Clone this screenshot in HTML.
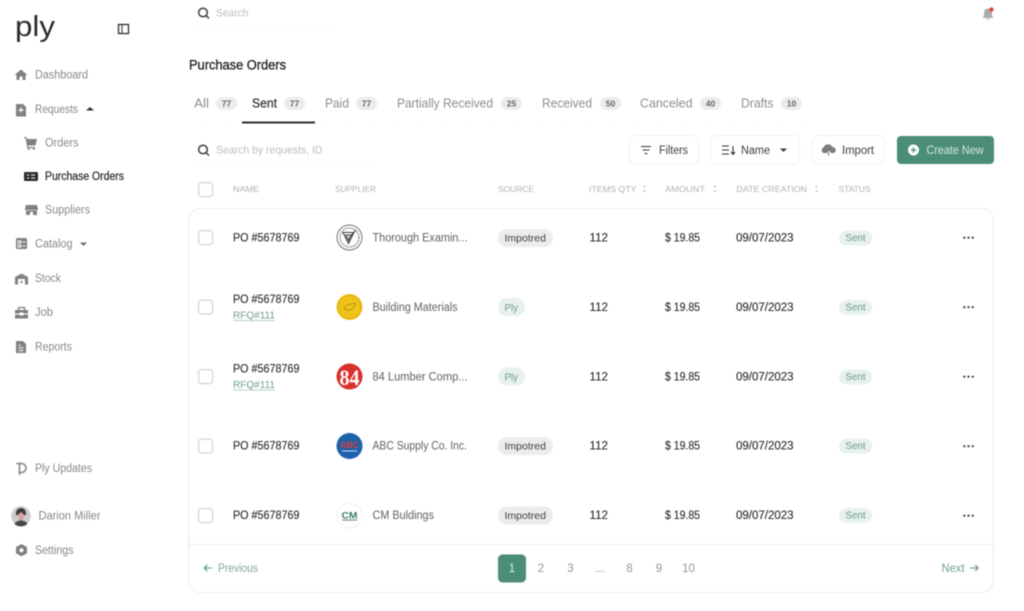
<!DOCTYPE html>
<html lang="en">
<head>
<meta charset="utf-8">
<title>Purchase Orders</title>
<style>
html,body{margin:0;padding:0;background:#fff;width:1024px;height:611px;overflow:hidden}
svg{display:block;filter:blur(.45px)}
text{font-family:"Liberation Sans",sans-serif;font-size:11px}
.nav{fill:#858989;font-size:11.5px}
.dk{fill:#2c2f2f;stroke:#2c2f2f;stroke-width:.25}
.tab{fill:#8a8e8e;font-size:13px}
.bdg{fill:#ececec}
.bt{fill:#666;font-size:8.5px;font-weight:bold;text-anchor:middle}
.th{fill:#afb3b3;font-size:8.5px}
.cell{fill:#282b2b;font-size:11.5px;stroke:#282b2b;stroke-width:.12}
.sup{fill:#5e6262;font-size:11.5px}
.pg{fill:#939797;font-size:11.5px;text-anchor:middle}
.ic{fill:#7e8282}
.cb{fill:#fff;stroke:#cfd5d4;stroke-width:1.2}
.btn{fill:#fff;stroke:#eef3f2;stroke-width:1}
</style>
</head>
<body>
<svg width="1024" height="611" viewBox="0 0 1024 611" xmlns="http://www.w3.org/2000/svg">
<rect width="1024" height="611" fill="#fff"/>

<!-- logo -->
<text x="15" y="36" fill="#2b2d2d" textLength="40" lengthAdjust="spacingAndGlyphs" style="font-size:29px">ply</text>
<!-- collapse -->
<rect x="118.500" y="24.500" width="10" height="9" fill="none" stroke="#2c2f2f" stroke-width="1.300"/>
<path d="M122 24.500v9" stroke="#2c2f2f" stroke-width="1"/>

<!-- sidebar icons -->
<path class="ic" d="M21 69.500l6.500 5.500h-2v5h-3v-3.500h-3V80h-3v-5h-2z"/>
<path class="ic" d="M16 104h7l3 3v9.500H16z"/><path d="M21 107.500v5M18.500 110h5" stroke="#fff" stroke-width="1.200"/>
<path class="ic" d="M24 137h2l1.500 2H37l-1.500 6.500H28l.5 1.500H35v1.200H27.500L25.500 138.200H24z"/><circle class="ic" cx="28.500" cy="149" r="1"/><circle class="ic" cx="34" cy="149" r="1"/>
<rect x="24" y="172" width="14" height="9" rx="1" fill="#2c2f2f"/><path d="M27 175h2M27 178h2M31 175h4M31 178h4" stroke="#fff" stroke-width="1"/>
<path class="ic" d="M26 205h11l1 3.500v1.500h-13v-1.500z"/><path class="ic" d="M26 210.500h11v4.500h-4v-3h-3v3h-4z"/>
<rect class="ic" x="16" y="238" width="11" height="11" rx="1.500"/><path d="M18 241h3v2h-3zM18 245h3v2h-3zM22.500 242h3M22.500 246h3" stroke="#fff" stroke-width=".9" fill="none"/>
<path class="ic" d="M15 277l6.500-3.500 6.500 3.500v7.500h-13z"/><rect x="18" y="279" width="7" height="5.500" fill="#fff"/><rect x="20.500" y="281" width="2" height="2" class="ic"/>
<path class="ic" d="M15 310h13v3.500h-4.500v-1h-4v1H15zM15 314.500h4.500v1h4v-1H28v4H15z"/><path d="M18.500 310v-2.500h6V310" fill="none" stroke="#7e8282" stroke-width="1.300"/>
<path class="ic" d="M16 341h7l3 3v9H16z"/><path d="M18.500 345.500h2.500M18.500 348h5M18.500 350.500h5" stroke="#fff" stroke-width=".9"/>
<path d="M16.500 463.500h5a4.500 4.500 0 0 1 0 9H20M19.500 463.500V475" fill="none" stroke="#7e8282" stroke-width="1.500"/>
<path class="ic" d="M21.500 544l5.500 3v6.400l-5.500 3-5.500-3V547z"/><circle cx="21.500" cy="550.200" r="2" fill="#fff"/>

<!-- avatar -->
<circle cx="21" cy="516" r="9.800" fill="#c9cecd"/>
<path d="M16 513a5 5 0 0 1 10 0v2h-10z" fill="#3a3c3c"/>
<ellipse cx="21" cy="516.500" rx="3" ry="4" fill="#d9a29b"/>
<path d="M14.500 524c1.500-2.500 3.500-3.500 6.500-3.500s5 1 6.500 3.500a9.800 9.800 0 0 1-13 0z" fill="#46494a"/>

<!-- sidebar text -->
<text class="nav" x="35" y="78.500" textLength="53" lengthAdjust="spacingAndGlyphs">Dashboard</text>
<text class="nav" x="35" y="113" textLength="43" lengthAdjust="spacingAndGlyphs">Requests</text>
<path d="M86 110.500l4-3.500 4 3.500z" fill="#2c2f2f"/>
<text class="nav" x="45" y="146.500" textLength="33.500" lengthAdjust="spacingAndGlyphs">Orders</text>
<text class="dk" x="45" y="180" textLength="79" lengthAdjust="spacingAndGlyphs" style="font-size:11.5px">Purchase Orders</text>
<text class="nav" x="45" y="213.500" textLength="45" lengthAdjust="spacingAndGlyphs">Suppliers</text>
<text class="nav" x="35" y="247.500" textLength="37.500" lengthAdjust="spacingAndGlyphs">Catalog</text>
<path d="M80 242.500h7l-3.500 3.500z" fill="#6a6e6e"/>
<text class="nav" x="35" y="282" textLength="26" lengthAdjust="spacingAndGlyphs">Stock</text>
<text class="nav" x="35" y="316" textLength="18" lengthAdjust="spacingAndGlyphs">Job</text>
<text class="nav" x="35" y="350.500" textLength="37" lengthAdjust="spacingAndGlyphs">Reports</text>
<text class="nav" x="35" y="472" textLength="57" lengthAdjust="spacingAndGlyphs">Ply Updates</text>
<text class="nav" x="38.500" y="519.500" textLength="62" lengthAdjust="spacingAndGlyphs">Darion Miller</text>
<text class="nav" x="35" y="554" textLength="38.500" lengthAdjust="spacingAndGlyphs">Settings</text>

<!-- top bar -->
<circle cx="203" cy="12.500" r="4.300" fill="none" stroke="#3a3d3d" stroke-width="1.500"/><path d="M206 15.500l3 3" stroke="#3a3d3d" stroke-width="1.500"/>
<text x="216" y="16.500" fill="#bcc0c0" textLength="32.500" lengthAdjust="spacingAndGlyphs">Search</text>
<path d="M196 25.500h136" stroke="#eef0f0" stroke-dasharray="1 3"/>
<path d="M983 18v-1l1-1v-3.500a4 4 0 0 1 8 0V16l1 1v1z" fill="#a9adad"/>
<rect x="986.500" y="18.500" width="3" height="1.300" fill="#c4c7c7"/>
<circle cx="991.500" cy="9.500" r="2.200" fill="#e8403a"/>

<!-- title -->
<text x="189" y="69.500" fill="#262828" stroke="#262828" stroke-width=".35" textLength="97" lengthAdjust="spacingAndGlyphs" style="font-size:13.5px">Purchase Orders</text>

<!-- tabs -->
<text class="tab" x="194" y="107.500" textLength="15" lengthAdjust="spacingAndGlyphs">All</text>
<rect class="bdg" x="216" y="97" width="21" height="13" rx="6.500"/><text class="bt" x="226.500" y="106.500">77</text>
<text class="tab" x="252" y="107.500" textLength="25" lengthAdjust="spacingAndGlyphs" style="fill:#2a2c2c;stroke:#2a2c2c;stroke-width:.2">Sent</text>
<rect class="bdg" x="284" y="97" width="21" height="13" rx="6.500"/><text class="bt" x="294.500" y="106.500">77</text>
<text class="tab" x="325" y="107.500" textLength="24" lengthAdjust="spacingAndGlyphs">Paid</text>
<rect class="bdg" x="356" y="97" width="21" height="13" rx="6.500"/><text class="bt" x="366.500" y="106.500">77</text>
<text class="tab" x="397" y="107.500" textLength="96" lengthAdjust="spacingAndGlyphs">Partially Received</text>
<rect class="bdg" x="501" y="97" width="21" height="13" rx="6.500"/><text class="bt" x="511.500" y="106.500">25</text>
<text class="tab" x="542" y="107.500" textLength="50" lengthAdjust="spacingAndGlyphs">Received</text>
<rect class="bdg" x="600" y="97" width="21" height="13" rx="6.500"/><text class="bt" x="610.500" y="106.500">50</text>
<text class="tab" x="640" y="107.500" textLength="52.500" lengthAdjust="spacingAndGlyphs">Canceled</text>
<rect class="bdg" x="700" y="97" width="21" height="13" rx="6.500"/><text class="bt" x="710.500" y="106.500">40</text>
<text class="tab" x="741" y="107.500" textLength="32.500" lengthAdjust="spacingAndGlyphs">Drafts</text>
<rect class="bdg" x="781" y="97" width="21" height="13" rx="6.500"/><text class="bt" x="791.500" y="106.500">10</text>
<path d="M189 122.500h620" stroke="#f0f2f2" stroke-dasharray="1 5"/>
<rect x="242" y="121.500" width="73" height="2" fill="#2c2f2f"/>

<!-- search -->
<circle cx="203" cy="149.500" r="4.300" fill="none" stroke="#3a3d3d" stroke-width="1.500"/><path d="M206 152.500l3 3" stroke="#3a3d3d" stroke-width="1.500"/>
<text x="216" y="153.500" fill="#bcc0c0" textLength="106.500" lengthAdjust="spacingAndGlyphs">Search by requests, ID</text>
<path d="M195 160.500h180" stroke="#eef0f0" stroke-dasharray="1 3"/>

<!-- buttons -->
<rect class="btn" x="629.500" y="135.500" width="69" height="29" rx="6"/>
<path d="M641 146.500h10M642.500 150h7M644.500 153.500h3" stroke="#333" stroke-width="1.100"/>
<text x="659" y="154" fill="#3a3d3d" textLength="29" lengthAdjust="spacingAndGlyphs" style="font-size:11.5px">Filters</text>
<rect class="btn" x="710.500" y="135.500" width="89" height="29" rx="6"/>
<path d="M722 146h7M722 150h7M722 154h7M733 146v8M731 152l2 2.500 2-2.500" fill="none" stroke="#333" stroke-width="1.100"/>
<text x="741" y="154" fill="#3a3d3d" textLength="29" lengthAdjust="spacingAndGlyphs" style="font-size:11.5px">Name</text>
<path d="M780 148.500h7l-3.500 3.500z" fill="#3a3d3d"/>
<rect class="btn" x="812.500" y="135.500" width="72" height="29" rx="6"/>
<path d="M823.500 153a3 3 0 0 1 0-5.500 5 5 0 0 1 9-.5 3.200 3.200 0 0 1 1.500 6h-3l-2-2.500-2 2.500z" fill="#7a7e7e"/>
<path d="M828.500 152v3.500" stroke="#7a7e7e" stroke-width="1.200"/>
<text x="842" y="154" fill="#3a3d3d" textLength="32" lengthAdjust="spacingAndGlyphs" style="font-size:11.5px">Import</text>
<rect x="897" y="136" width="97" height="28" rx="4" fill="#4b8e75"/>
<circle cx="913.500" cy="150" r="5.500" fill="#fff"/><path d="M913.500 147.200v5.600M910.700 150h5.600" stroke="#4b8e75" stroke-width="1.200"/>
<text x="926.500" y="154" fill="#d6e7e0" textLength="57" lengthAdjust="spacingAndGlyphs" style="font-size:11.5px">Create New</text>

<!-- header row -->
<rect class="cb" x="198.600" y="182.600" width="14" height="14" rx="3"/>
<text class="th" x="233" y="192" textLength="26" lengthAdjust="spacingAndGlyphs">NAME</text>
<text class="th" x="335" y="192" textLength="41" lengthAdjust="spacingAndGlyphs">SUPPLIER</text>
<text class="th" x="498" y="192" textLength="36" lengthAdjust="spacingAndGlyphs">SOURCE</text>
<text class="th" x="589" y="192" textLength="47.500" lengthAdjust="spacingAndGlyphs">ITEMS QTY</text>
<path d="M643 187l1.500-1.500 1.500 1.500zM643 190.500l1.500 1.500 1.500-1.500z" fill="#a9adad"/>
<text class="th" x="665" y="192" textLength="40" lengthAdjust="spacingAndGlyphs">AMOUNT</text>
<path d="M713.500 187l1.500-1.500 1.500 1.500zM713.500 190.500l1.500 1.500 1.500-1.500z" fill="#a9adad"/>
<text class="th" x="736.500" y="192" textLength="70.500" lengthAdjust="spacingAndGlyphs">DATE CREATION</text>
<path d="M815 187l1.500-1.500 1.500 1.500zM815 190.500l1.500 1.500 1.500-1.500z" fill="#a9adad"/>
<text class="th" x="838.500" y="192" textLength="32" lengthAdjust="spacingAndGlyphs">STATUS</text>

<!-- table frame -->
<rect x="188.500" y="208.500" width="805" height="384" rx="12" fill="#fff" stroke="#e8eeed"/>
<path d="M189 544.500h804" stroke="#e8eeed"/>

<!-- row 1 -->
<rect class="cb" x="198.600" y="230.600" width="14" height="14" rx="3"/>
<text class="cell" x="233" y="241.500" textLength="66.500" lengthAdjust="spacingAndGlyphs">PO #5678769</text>
<circle cx="349.500" cy="237.500" r="12.500" fill="#fff" stroke="#777" stroke-width="1"/>
<circle cx="349.500" cy="237.500" r="9.500" fill="none" stroke="#888" stroke-width="1.500" stroke-dasharray="1.500 1"/>
<path d="M343 232.500h11l-5.500 11zM346 235h5l-2.500 5.500zM349 238l7-8" fill="none" stroke="#444" stroke-width="1.100"/>
<text class="sup" x="372.500" y="241.500" textLength="95" lengthAdjust="spacingAndGlyphs">Thorough Examin...</text>
<rect x="498" y="229" width="55" height="18" rx="9" fill="#ececec"/>
<text x="504.500" y="241.500" fill="#3d4040" textLength="41.500" lengthAdjust="spacingAndGlyphs" style="font-size:10.500px">Impotred</text>
<text class="cell" x="589.500" y="241.500" textLength="18.500" lengthAdjust="spacingAndGlyphs">112</text>
<text class="cell" x="665" y="241.500" textLength="35" lengthAdjust="spacingAndGlyphs">$ 19.85</text>
<text class="cell" x="736" y="241.500" textLength="57.500" lengthAdjust="spacingAndGlyphs">09/07/2023</text>
<rect x="839" y="230.500" width="33" height="15" rx="7.500" fill="#e8f1ee"/>
<text x="845.500" y="241" fill="#6a9c8a" textLength="20" lengthAdjust="spacingAndGlyphs" style="font-size:10.500px">Sent</text>
<path d="M963.300 237.700h10.400" stroke="#333" stroke-width="1.800" stroke-dasharray="2 2.200"/>

<!-- row 2 -->
<rect class="cb" x="198.600" y="300.100" width="14" height="14" rx="3"/>
<text class="cell" x="233" y="303" textLength="66.500" lengthAdjust="spacingAndGlyphs">PO #5678769</text>
<text x="233" y="318.500" fill="#6d9f8c" textLength="42" lengthAdjust="spacingAndGlyphs" style="font-size:10px">RFQ#111</text>
<path d="M233 320.500h42" stroke="#9fc1b4" stroke-width=".8"/>
<circle cx="349.500" cy="307" r="13" fill="#f0c31a"/>
<circle cx="349.500" cy="307" r="11.500" fill="none" stroke="#cf9f10" stroke-dasharray="1.500 1.500"/>
<path d="M344 309l2-3.500 4-1.500 5-.5-1 4-3.500 2.500h-4z" fill="none" stroke="#bd950f" stroke-width="1"/>
<text class="sup" x="372.500" y="311" textLength="85" lengthAdjust="spacingAndGlyphs">Building Materials</text>
<rect x="498" y="298" width="27" height="18" rx="9" fill="#e8f1ee"/>
<text x="504.500" y="311" fill="#6a9c8a" textLength="13.500" lengthAdjust="spacingAndGlyphs" style="font-size:10.500px">Ply</text>
<text class="cell" x="589.500" y="311" textLength="18.500" lengthAdjust="spacingAndGlyphs">112</text>
<text class="cell" x="665" y="311" textLength="35" lengthAdjust="spacingAndGlyphs">$ 19.85</text>
<text class="cell" x="736" y="311" textLength="57.500" lengthAdjust="spacingAndGlyphs">09/07/2023</text>
<rect x="839" y="300" width="33" height="15" rx="7.500" fill="#e8f1ee"/>
<text x="845.500" y="310.500" fill="#6a9c8a" textLength="20" lengthAdjust="spacingAndGlyphs" style="font-size:10.500px">Sent</text>
<path d="M963.300 307.200h10.400" stroke="#333" stroke-width="1.800" stroke-dasharray="2 2.200"/>

<!-- row 3 -->
<rect class="cb" x="198.600" y="369.600" width="14" height="14" rx="3"/>
<text class="cell" x="233" y="372.500" textLength="66.500" lengthAdjust="spacingAndGlyphs">PO #5678769</text>
<text x="233" y="388" fill="#6d9f8c" textLength="42" lengthAdjust="spacingAndGlyphs" style="font-size:10px">RFQ#111</text>
<path d="M233 390h42" stroke="#9fc1b4" stroke-width=".8"/>
<circle cx="349.500" cy="376.500" r="13" fill="#d9322c"/>
<text x="339.500" y="385" fill="#fff" textLength="20" lengthAdjust="spacingAndGlyphs" style="font-family:'Liberation Serif',serif;font-size:22px;font-weight:bold">84</text>
<text class="sup" x="372.500" y="380.500" textLength="95" lengthAdjust="spacingAndGlyphs">84 Lumber Comp...</text>
<rect x="498" y="367.500" width="27" height="18" rx="9" fill="#e8f1ee"/>
<text x="504.500" y="380.500" fill="#6a9c8a" textLength="13.500" lengthAdjust="spacingAndGlyphs" style="font-size:10.500px">Ply</text>
<text class="cell" x="589.500" y="380.500" textLength="18.500" lengthAdjust="spacingAndGlyphs">112</text>
<text class="cell" x="665" y="380.500" textLength="35" lengthAdjust="spacingAndGlyphs">$ 19.85</text>
<text class="cell" x="736" y="380.500" textLength="57.500" lengthAdjust="spacingAndGlyphs">09/07/2023</text>
<rect x="839" y="369.500" width="33" height="15" rx="7.500" fill="#e8f1ee"/>
<text x="845.500" y="380" fill="#6a9c8a" textLength="20" lengthAdjust="spacingAndGlyphs" style="font-size:10.500px">Sent</text>
<path d="M963.300 376.700h10.400" stroke="#333" stroke-width="1.800" stroke-dasharray="2 2.200"/>

<!-- row 4 -->
<rect class="cb" x="198.600" y="439.100" width="14" height="14" rx="3"/>
<text class="cell" x="233" y="449.500" textLength="66.500" lengthAdjust="spacingAndGlyphs">PO #5678769</text>
<circle cx="349.500" cy="446" r="13" fill="#1c62ac"/>
<text x="340" y="448" fill="#e33b35" textLength="19" lengthAdjust="spacingAndGlyphs" style="font-size:9px;font-weight:bold">ABC</text>
<path d="M342 451h15" stroke="#cfe0f0" stroke-width="1"/>
<text class="sup" x="372.500" y="449.500" textLength="94.500" lengthAdjust="spacingAndGlyphs">ABC Supply Co. Inc.</text>
<rect x="498" y="437" width="55" height="18" rx="9" fill="#ececec"/>
<text x="504.500" y="449.500" fill="#3d4040" textLength="41.500" lengthAdjust="spacingAndGlyphs" style="font-size:10.500px">Impotred</text>
<text class="cell" x="589.500" y="449.500" textLength="18.500" lengthAdjust="spacingAndGlyphs">112</text>
<text class="cell" x="665" y="449.500" textLength="35" lengthAdjust="spacingAndGlyphs">$ 19.85</text>
<text class="cell" x="736" y="449.500" textLength="57.500" lengthAdjust="spacingAndGlyphs">09/07/2023</text>
<rect x="839" y="438.500" width="33" height="15" rx="7.500" fill="#e8f1ee"/>
<text x="845.500" y="449" fill="#6a9c8a" textLength="20" lengthAdjust="spacingAndGlyphs" style="font-size:10.500px">Sent</text>
<path d="M963.300 446.200h10.400" stroke="#333" stroke-width="1.800" stroke-dasharray="2 2.200"/>

<!-- row 5 -->
<rect class="cb" x="198.600" y="508.600" width="14" height="14" rx="3"/>
<text class="cell" x="233" y="519" textLength="66.500" lengthAdjust="spacingAndGlyphs">PO #5678769</text>
<circle cx="349.500" cy="515.500" r="12.500" fill="#fff" stroke="#eef1f1"/>
<text x="341.500" y="518.500" fill="#3a7d62" textLength="16" lengthAdjust="spacingAndGlyphs" style="font-size:9.500px;font-weight:bold">CM</text>
<path d="M342 520h15" stroke="#555" stroke-width=".8"/>
<text class="sup" x="372.500" y="519" textLength="61.500" lengthAdjust="spacingAndGlyphs">CM Buldings</text>
<rect x="498" y="506.500" width="55" height="18" rx="9" fill="#ececec"/>
<text x="504.500" y="519" fill="#3d4040" textLength="41.500" lengthAdjust="spacingAndGlyphs" style="font-size:10.500px">Impotred</text>
<text class="cell" x="589.500" y="519" textLength="18.500" lengthAdjust="spacingAndGlyphs">112</text>
<text class="cell" x="665" y="519" textLength="35" lengthAdjust="spacingAndGlyphs">$ 19.85</text>
<text class="cell" x="736" y="519" textLength="57.500" lengthAdjust="spacingAndGlyphs">09/07/2023</text>
<rect x="839" y="508" width="33" height="15" rx="7.500" fill="#e8f1ee"/>
<text x="845.500" y="518.500" fill="#6a9c8a" textLength="20" lengthAdjust="spacingAndGlyphs" style="font-size:10.500px">Sent</text>
<path d="M963.300 515.700h10.400" stroke="#333" stroke-width="1.800" stroke-dasharray="2 2.200"/>

<!-- pagination -->
<path d="M212 568h-7.500M207.500 564.800l-3.200 3.200 3.200 3.200" fill="none" stroke="#5b957f" stroke-width="1.100"/>
<text x="218" y="572" fill="#80a999" textLength="40" lengthAdjust="spacingAndGlyphs" style="font-size:11.500px">Previous</text>
<rect x="498" y="554.500" width="28" height="28" rx="4.500" fill="#4b8e75"/>
<text x="512" y="572" fill="#dcebe5" text-anchor="middle" style="font-size:11.500px">1</text>
<text class="pg" x="541" y="572">2</text>
<text class="pg" x="570.500" y="572">3</text>
<text class="pg" x="600" y="572">...</text>
<text class="pg" x="629.500" y="572">8</text>
<text class="pg" x="659" y="572">9</text>
<text class="pg" x="688.500" y="572">10</text>
<text x="941.500" y="572" fill="#6ea28f" textLength="23" lengthAdjust="spacingAndGlyphs" style="font-size:11.500px">Next</text>
<path d="M970 568h8M975 564.800l3.200 3.200-3.200 3.200" fill="none" stroke="#5b957f" stroke-width="1.100"/>
</svg>
</body>
</html>
